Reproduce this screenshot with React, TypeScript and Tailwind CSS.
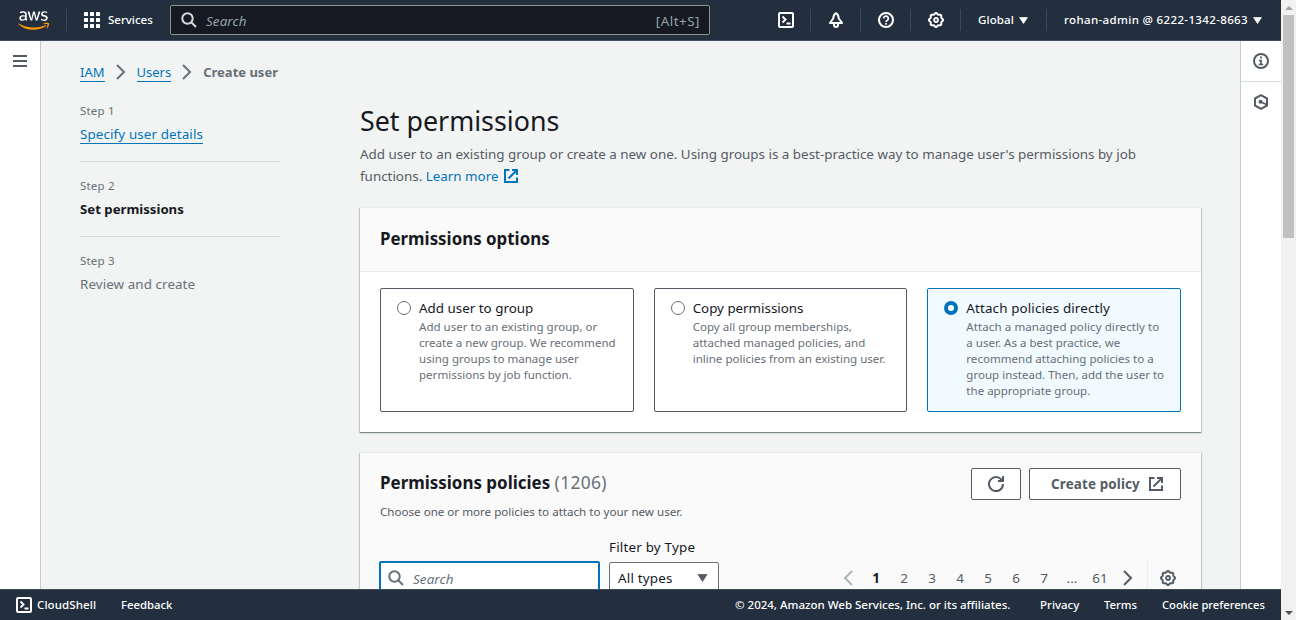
import React from "react";
import { FaAws } from "react-icons/fa";

type IconProps = { className?: string; children: React.ReactNode };

function Icon({ className = "", children }: IconProps) {
  return (
    <svg viewBox="0 0 16 16" fill="none" stroke="currentColor" strokeWidth="2" className={`size-4 shrink-0 ${className}`}>
      {children}
    </svg>
  );
}

const Search = ({ className }: { className?: string }) => (
  <Icon className={className}>
    <path d="m10.500 10.500 4.500 4.500" />
    <circle cx="6.500" cy="6.500" r="5.200" />
  </Icon>
);

const External = ({ className }: { className?: string }) => (
  <Icon className={className}>
    <path d="M9 2h5v5" />
    <path d="m5.500 10.500 8-8" />
    <path d="M6.500 2H2v12h12V9.500" />
  </Icon>
);

const Angle = ({ className }: { className?: string }) => (
  <Icon className={className}>
    <path d="m4 1 7 7-7 7" />
  </Icon>
);

const Shell = ({ className }: { className?: string }) => (
  <Icon className={className}>
    <rect x="1" y="1" width="14" height="14" rx="1" />
    <path d="M4.500 4.500 7.500 7.500 4.500 10.500M8.500 11.500h4" strokeWidth="1.900" />
  </Icon>
);

// Eight-lobed outline of the settings gear.
const gearPoints = Array.from({ length: 96 }, (_, i) => {
  const a = (i / 96) * Math.PI * 2;
  const r = 6.4 + 0.65 * Math.cos(8 * a);
  return `${(8 + r * Math.cos(a)).toFixed(2)},${(8 + r * Math.sin(a)).toFixed(2)}`;
}).join(" ");

const Gear = ({ className }: { className?: string }) => (
  <Icon className={className}>
    <polygon points={gearPoints} strokeWidth="2" strokeLinejoin="round" />
    <circle cx="8" cy="8" r="2" strokeWidth="1.800" />
  </Icon>
);

const Caret = ({ className }: { className?: string }) => (
  <svg viewBox="0 0 10 8" fill="currentColor" className={className}>
    <path d="M0.500 0.500h9L5 7.500z" stroke="currentColor" strokeWidth="0.800" strokeLinejoin="round" />
  </svg>
);

function TopBar() {
  const cell = "flex h-[22px] items-center border-l border-[#414750]";
  return (
    <header className="flex h-[41px] shrink-0 items-center border-b border-[#414d5c] bg-[#232f3e] text-[11.5px] font-medium whitespace-nowrap text-white">
      <FaAws className="ml-[18px] mt-px h-[25px] w-[31px] shrink-0" fill="url(#smile)" />
      <svg className="size-0" aria-hidden="true">
        <linearGradient id="smile" x1="0" y1="0" x2="0" y2="1">
          <stop offset="0.600" stopColor="#fff" />
          <stop offset="0.600" stopColor="#f90" />
        </linearGradient>
      </svg>
      <div className="ml-[17px] h-[22px] w-px bg-[#414750]" />
      <svg viewBox="0 0 16 16" fill="currentColor" className="ml-[17px] size-4">
        {[0, 6, 12].map((y) => [0, 6, 12].map((x) => <rect key={`${x}-${y}`} x={x} y={y} width="4" height="4" rx="0.500" />))}
      </svg>
      <span className="ml-2 w-[62px]">Services</span>
      <div className="flex h-[30px] w-[540px] items-center rounded-xs border border-[#879596] bg-[#16191f] pr-[9px] pl-[10px] font-normal text-[#95a5a6]">
        <Search className="text-[#d5dbdb]" />
        <span className="mt-[3px] ml-[9px] flex-1 text-[13.4px] tracking-[0.1px] italic">Search</span>
        <span className="mt-[3px] text-[13.4px] tracking-[0.5px]">[Alt+S]</span>
      </div>
      <div className="ml-[52px] flex items-center">
        <div className="flex w-12 justify-center">
          <Shell />
        </div>
        <div className={`${cell} w-[50px] justify-center`}>
          <Icon>
            <path d="M8 1.200C6.300 1.800 5.600 3.500 5.200 6.500L1.900 11h12.200L10.800 6.500C10.400 3.500 9.700 1.800 8 1.200Z" strokeLinejoin="round" />
            <path d="M6 12v1a2 2 0 0 0 4 0v-1" />
          </Icon>
        </div>
        <div className={`${cell} w-[50px] justify-center`}>
          <Icon>
            <circle cx="8" cy="8" r="7" />
            <path d="M5.700 6.500a2.300 2.300 0 1 1 3.500 1.900C8.300 8.900 8 9.200 8 10M8 11v1.800" strokeWidth="1.700" />
          </Icon>
        </div>
        <div className={`${cell} w-[50px] justify-center`}>
          <Gear />
        </div>
        <div className={`${cell} w-[86px] pl-[17px]`}>
          <span className="w-[41px] tracking-[0.1px]">Global</span>
          <Caret className="h-[7px] w-[9px]" />
        </div>
        <div className={`${cell} w-[234px] pl-[17px]`}>
          <span className="w-[189px] text-[11.5px] tracking-[0.36px]">rohan-admin @ 6222-1342-8663</span>
          <Caret className="h-[7px] w-[9px]" />
        </div>
      </div>
    </header>
  );
}

const steps = [
  { n: 1, label: "Specify user details", style: "border-b border-[#0073bb] text-[13.4px] tracking-[0.12px] text-[#0073bb]" },
  { n: 2, label: "Set permissions", style: "text-[13.2px] font-bold text-[#16191f]" },
  { n: 3, label: "Review and create", style: "text-[13.4px] tracking-[0.08px] text-[#687078]" },
];

function Steps() {
  return (
    <nav className="flex w-[200px] shrink-0 flex-col">
      {steps.map((s) => (
        <div key={s.n} className="mb-[15px] flex h-[60px] flex-col items-start border-b border-[#d5dbdb] last:border-0">
          <span className="text-[11.5px] leading-[18px] tracking-[0.2px] text-[#687078]">Step {s.n}</span>
          <span className={`mt-[5px] leading-[18px] whitespace-nowrap ${s.style}`}>{s.label}</span>
        </div>
      ))}
    </nav>
  );
}

const cardClass =
  "shrink-0 border-t border-[#eaeded] shadow-[0_1px_1px_0_rgba(0,28,36,0.3),1px_1px_1px_0_rgba(0,28,36,0.15),-1px_1px_1px_0_rgba(0,28,36,0.15)]";

const options = [
  {
    title: "Add user to group",
    titleStyle: "text-[13.4px]",
    lines: ["Add user to an existing group, or", "create a new group. We recommend", "using groups to manage user", "permissions by job function."],
    on: false,
  },
  {
    title: "Copy permissions",
    titleStyle: "text-[13.35px]",
    lines: ["Copy all group memberships,", "attached managed policies, and", "inline policies from an existing user."],
    on: false,
  },
  {
    title: "Attach policies directly",
    titleStyle: "text-[13.4px] tracking-[0.13px]",
    lines: ["Attach a managed policy directly to", "a user. As a best practice, we", "recommend attaching policies to a", "group instead. Then, add the user to", "the appropriate group."],
    on: true,
  },
];

function Options() {
  return (
    <section className={`${cardClass} h-[225px] bg-white`}>
      <div className="flex h-16 items-center border-b border-[#eaeded] bg-[#fafafa] px-5 pb-0.5">
        <h2 className="text-[16.9px] leading-[22px] font-bold text-[#16191f]">Permissions options</h2>
      </div>
      <div className="grid grid-cols-3 gap-5 px-5 pt-4">
        {options.map((o) => (
          <div
            key={o.title}
            className={`flex h-[124px] rounded-xs border pt-[9px] pl-4 ${o.on ? "border-[#0073bb] bg-[#f1faff]" : "border-[#545b64] bg-white"}`}
          >
            <span className={`mt-[3px] size-3.5 shrink-0 rounded-full bg-white ${o.on ? "border-4 border-[#0073bb]" : "border border-[#687078]"}`} />
            <div className="ml-2 whitespace-nowrap">
              <p className={`leading-5 text-[#16191f] ${o.titleStyle}`}>{o.title}</p>
              <p className="mt-px text-[11.55px] leading-4 text-[#687078]">
                {o.lines.map((l, i) => (
                  <span key={l} className={o.on && i === 0 ? "block tracking-[0.08px]" : "block"}>{l}</span>
                ))}
              </p>
            </div>
          </div>
        ))}
      </div>
    </section>
  );
}

function Policies() {
  const page = "w-7 pt-px text-center";
  return (
    <section className={`${cardClass} mt-5 h-[300px] bg-[#fafafa] px-5 pt-[15px]`}>
      <div className="flex h-8 items-center">
        <h2 className="flex-1 pb-[2px] text-[16.95px] leading-[22px] font-bold text-[#16191f]">
          Permissions policies <span className="text-[17.4px] leading-none font-normal tracking-[0.35px] text-[#687078]">(1206)</span>
        </h2>
        <div className="flex gap-2 text-[#545b64]">
          <button className="flex h-8 w-[50px] items-center justify-center rounded-xs border border-[#545b64] bg-white">
            <Icon>
              <path d="M10 5h5V0" />
              <path d="M15 8a7 7 0 1 1-.7-3" />
            </Icon>
          </button>
          <button className="flex h-8 w-[152px] items-center justify-center gap-2 rounded-xs border border-[#545b64] bg-white pl-[5px] text-[13.4px] font-bold tracking-[0.14px]">
            Create policy
            <External />
          </button>
        </div>
      </div>
      <p className="mt-[3px] text-[11.6px] leading-[18px] text-[#545b64]">Choose one or more policies to attach to your new user.</p>
      <div className="mt-4 flex items-start text-[13.4px] text-[#545b64]">
        <div className="-ml-px mt-6 flex h-[34px] w-[221px] items-center rounded-xs border-2 border-[#0073bb] bg-white pl-[7px]">
          <Search className="text-[#687078]" />
          <span className="mt-[3px] ml-[9px] tracking-[0.1px] italic text-[#687078]">Search</span>
        </div>
        <div className="ml-[9px] w-[110px] tracking-[0.2px] text-[#16191f]">
          <p className="h-[25px] leading-5">Filter by Type</p>
          <div className="flex h-8 items-center justify-between rounded-xs border border-[#687078] bg-white pr-2.5 pl-2">
            <span className="pt-px">All types</span>
            <Caret className="h-2 w-[11px] text-[#545b64]" />
          </div>
        </div>
        <div className="mt-[25px] ml-auto flex h-8 items-center">
          <Angle className="mr-1.5 rotate-180 text-[#aab7b8]" />
          <span className={`${page} font-bold text-[#16191f]`}>1</span>
          {[2, 3, 4, 5, 6, 7].map((n) => (
            <span key={n} className={page}>{n}</span>
          ))}
          <span className={page}>...</span>
          <span className={page}>61</span>
          <Angle className="ml-1.5" />
          <div className="ml-[11px] flex h-8 items-center border-l border-[#eaeded] pr-[5px] pl-3">
            <Gear />
          </div>
        </div>
      </div>
    </section>
  );
}

function Footer() {
  return (
    <footer className="flex h-[31px] shrink-0 items-center border-t border-[#414d5c] bg-[#232f3e] pl-4 text-[11.5px] font-medium whitespace-nowrap text-white">
      <Shell />
      <span className="ml-[5px] w-[84px] tracking-[0.1px]">CloudShell</span>
      <span className="w-[614px] text-[11.3px]">Feedback</span>
      <span className="w-[305px]">© 2024, Amazon Web Services, Inc. or its affiliates.</span>
      <span className="w-16">Privacy</span>
      <span className="w-[58px] text-[11.3px]">Terms</span>
      <span className="text-[11.2px]">Cookie preferences</span>
    </footer>
  );
}

export default function App() {
  return (
    <div className="flex h-[620px] w-[1296px] overflow-hidden bg-[#f2f3f3] font-['Noto_Sans',sans-serif]">
      <div className="flex w-[1281px] flex-col">
        <TopBar />
        <div className="flex min-h-0 flex-1">
          <aside className="flex w-[41px] shrink-0 flex-col items-center border-r border-[#c5cccc] bg-white pt-[14px] text-[#545b64]">
            <svg viewBox="0 0 14 12" fill="currentColor" className="h-3 w-3.5">
              <path d="M0 0h14v2H0zM0 5h14v2H0zM0 10h14v2H0z" />
            </svg>
          </aside>
          <main className="flex min-w-0 flex-1 flex-col overflow-hidden pr-[39px] pl-[39px]">
            <div className="mt-[21px] flex h-5 shrink-0 items-center text-[13px] leading-[18px] text-[#687078]">
              <span className="border-b border-[#0073bb] text-[#0073bb]">IAM</span>
              <Angle className="mx-2" />
              <span className="border-b border-[#0073bb] text-[#0073bb]">Users</span>
              <Angle className="mx-2" />
              <span className="font-bold">Create user</span>
            </div>
            <div className="mt-5 flex min-h-0 flex-1">
              <Steps />
              <div className="ml-20 flex w-[841px] shrink-0 flex-col">
                <h1 className="mt-px shrink-0 text-[26.8px] leading-9 text-[#16191f]">Set permissions</h1>
                <p className="mt-1 h-16 shrink-0 text-[13.4px] leading-[22px] whitespace-nowrap text-[#545b64]">
                  <span className="block">Add user to an existing group or create a new one. Using groups is a best-practice way to manage user's permissions by job</span>
                  <span className="flex items-center gap-1">
                    <span>functions. <span className="text-[#0073bb]">Learn more</span></span>
                    <External className="text-[#0073bb]" />
                  </span>
                </p>
                <Options />
                <Policies />
              </div>
            </div>
          </main>
          <aside className="flex w-[41px] shrink-0 flex-col items-center border-l border-[#c5cccc] bg-white text-[#545b64]">
            <div className="flex h-[41px] w-full items-center justify-center border-b border-[#d5dbdb]">
              <Icon>
                <circle cx="8" cy="8" r="7" />
                <path d="M8 12V7.500H6M5.800 11.500h4.400M8 3.500v2" strokeWidth="1.700" />
              </Icon>
            </div>
            <div className="flex h-10 items-center">
              <Icon>
                <path d="M8 1.200 14 4.500v7L8 14.800 2 11.500v-7z" strokeLinejoin="round" />
                <circle cx="7.500" cy="7.800" r="1" fill="currentColor" />
                <path d="m8 8 5.500 2.500" strokeWidth="1.700" />
              </Icon>
            </div>
          </aside>
        </div>
        <Footer />
      </div>
      <div className="flex w-[15px] flex-col items-center bg-[#f1f1f1] pt-1.5 pb-[5px]">
        <svg viewBox="0 0 8 4" className="h-1 w-2 fill-[#a3a3a3]"><path d="M0 4 4 0l4 4z" /></svg>
        <div className="mt-[5px] h-[223px] w-[11px] bg-[#c1c1c1]" />
        <svg viewBox="0 0 8 4" className="mt-auto h-1 w-2 fill-[#505050]"><path d="M0 0h8L4 4z" /></svg>
      </div>
    </div>
  );
}
